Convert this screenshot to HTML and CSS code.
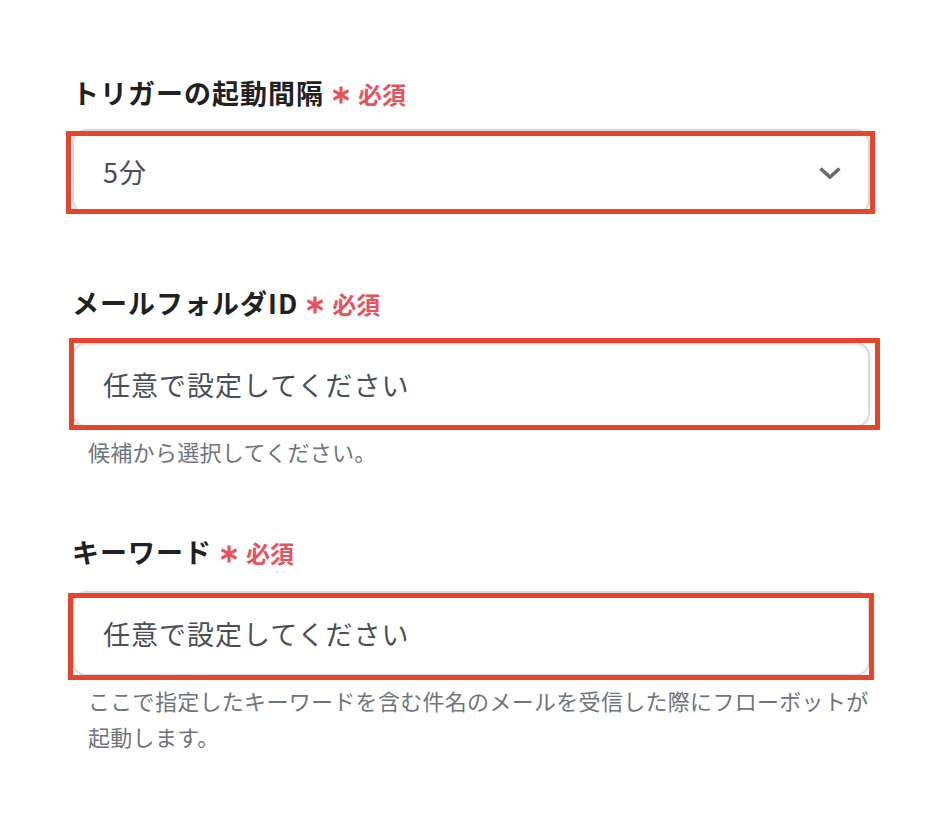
FILE: index.html
```html
<!DOCTYPE html>
<html lang="ja">
<head>
<meta charset="utf-8">
<title>フォーム</title>
<link rel="stylesheet" href="styles.css">
</head>
<body>
<main class="form">
  <section class="field field--select">
    <div class="label">
      <span class="label-text">トリガーの起動間隔</span>
      <span class="required">
        <svg class="req-star" viewBox="0 0 18 18" width="18" height="18" aria-hidden="true"><path d="M9 0.5V17.5M1.5 4.7L16.5 13.3M1.5 13.3L16.5 4.7" stroke="currentColor" stroke-width="3.2" fill="none"/></svg>
        <span class="req-text">必須</span>
      </span>
    </div>
    <div class="control">
      <div class="input select">
        <span class="value">5分</span>
        <svg class="chevron" viewBox="0 0 24 14" width="24" height="14" aria-hidden="true"><path d="M2.5 2.5L12 11L21.5 2.5" stroke="currentColor" stroke-width="3.6" fill="none"/></svg>
      </div>
      <div class="mark mark--1"></div>
    </div>
  </section>

  <section class="field">
    <div class="label">
      <span class="label-text">メールフォルダID</span>
      <span class="required">
        <svg class="req-star" viewBox="0 0 18 18" width="18" height="18" aria-hidden="true"><path d="M9 0.5V17.5M1.5 4.7L16.5 13.3M1.5 13.3L16.5 4.7" stroke="currentColor" stroke-width="3.2" fill="none"/></svg>
        <span class="req-text">必須</span>
      </span>
    </div>
    <div class="control">
      <div class="input"><span class="value">任意で設定してください</span></div>
      <div class="mark mark--2"></div>
    </div>
    <p class="help">候補から選択してください。</p>
  </section>

  <section class="field">
    <div class="label">
      <span class="label-text">キーワード</span>
      <span class="required">
        <svg class="req-star" viewBox="0 0 18 18" width="18" height="18" aria-hidden="true"><path d="M9 0.5V17.5M1.5 4.7L16.5 13.3M1.5 13.3L16.5 4.7" stroke="currentColor" stroke-width="3.2" fill="none"/></svg>
        <span class="req-text">必須</span>
      </span>
    </div>
    <div class="control">
      <div class="input"><span class="value">任意で設定してください</span></div>
      <div class="mark mark--3"></div>
    </div>
    <p class="help">ここで指定したキーワードを含む件名のメールを受信した際にフローボットが起動します。</p>
  </section>
</main>
</body>
</html>
```

FILE: styles.css
```css
* { box-sizing: border-box; }

html, body {
  margin: 0;
  padding: 0;
  background: #ffffff;
}

body {
  font-family: "Noto Sans CJK JP", "Noto Sans", sans-serif;
  color: #222222;
}

.form {
  width: 900px;
  padding: 74px 0 0 72px;
  display: flex;
  flex-direction: column;
}

.field {
  display: flex;
  flex-direction: column;
  margin-bottom: 64px;
}

.field--select {
  margin-bottom: 70px;
}

.label {
  display: flex;
  align-items: center;
  height: 38px;
  margin-bottom: 20px;
}

.field--select .label {
  margin-bottom: 17px;
}

.label-text {
  font-size: 27px;
  font-weight: 700;
  line-height: 38px;
  letter-spacing: 1px;
  color: #212121;
}

.required {
  display: flex;
  align-items: center;
  gap: 8px;
  margin-left: 8px;
  margin-top: 4px;
  color: #e6535f;
}

.req-star {
  display: block;
  width: 18px;
  height: 18px;
}

.req-text {
  font-size: 24px;
  font-weight: 700;
  line-height: 30px;
  margin-top: -3px;
}

.control {
  position: relative;
  width: 798px;
}

.input {
  height: 85px;
  border: 2px solid #d6dadf;
  border-radius: 14px;
  box-shadow: inset 0 2px 1px rgba(0, 0, 0, 0.05);
  background: #ffffff;
  display: flex;
  align-items: center;
  padding: 0 26px 0 29px;
}

.value {
  font-size: 27px;
  line-height: 36px;
  letter-spacing: 1px;
  color: #4a4f57;
}

.select {
  justify-content: space-between;
}

.chevron {
  display: block;
  color: #6b6b6b;
  margin-top: 2px;
}

.mark {
  position: absolute;
  border: 5px solid #e8432b;
  pointer-events: none;
}

.mark--1 { left: -6px; right: -5px; top: 2px; bottom: 0px; }
.mark--2 { left: -3px; right: -10px; top: -4px; bottom: -3px; }
.mark--3 { left: -4px; right: -4px; top: 2px; bottom: -4px; }

.help {
  width: 816px;
  margin: 6px 0 0 0;
  padding-left: 16px;
  font-size: 22px;
  line-height: 36px;
  letter-spacing: 0.3px;
  color: #6f747b;
}
```
